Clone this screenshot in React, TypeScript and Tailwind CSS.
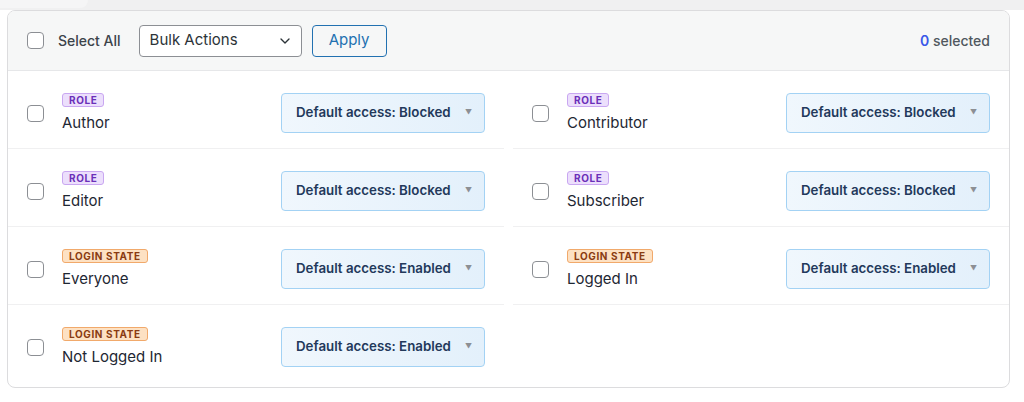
import { ChevronDown } from "lucide-react";

type Rule = {
  kind: "role" | "login";
  name: string;
  access: "Blocked" | "Enabled";
};

const rules: Rule[] = [
  { kind: "role", name: "Author", access: "Blocked" },
  { kind: "role", name: "Contributor", access: "Blocked" },
  { kind: "role", name: "Editor", access: "Blocked" },
  { kind: "role", name: "Subscriber", access: "Blocked" },
  { kind: "login", name: "Everyone", access: "Enabled" },
  { kind: "login", name: "Logged In", access: "Enabled" },
  { kind: "login", name: "Not Logged In", access: "Enabled" },
];

const Checkbox = () => (
  <span className="block w-[17px] h-[17px] shrink-0 rounded-[4px] border border-[#8c8f94] bg-white" />
);

const Badge = ({ kind }: { kind: Rule["kind"] }) =>
  kind === "role" ? (
    <span className="inline-flex items-center h-[14px] px-[6px] rounded-[3px] border border-[#c9a7f1] bg-[#ecdffc] text-[#6a2fb8] text-[10px] font-bold tracking-[0.06em] leading-none">
      ROLE
    </span>
  ) : (
    <span className="inline-flex items-center h-[14px] px-[6px] rounded-[3px] border border-[#f1a96b] bg-[#fde1c3] text-[#8a3b12] text-[10px] font-bold tracking-[0.06em] leading-none">
      LOGIN STATE
    </span>
  );

const RuleRow = ({ rule, last }: { rule: Rule; last: boolean }) => (
  <div
    className={
      last
        ? "flex items-center px-[19px] pt-[22px] pb-[15px]"
        : "flex items-center px-[19px] pt-[22px] pb-[15px] border-b border-[#f0f0f1]"
    }
  >
    <Checkbox />
    <div className="ml-[18px] flex-1 flex flex-col items-start">
      <Badge kind={rule.kind} />
      <span className="mt-[5px] text-[15px] leading-[21px] text-[#1e2733]">{rule.name}</span>
    </div>
    <div className="w-[204px] h-[40px] flex items-center justify-between pl-[14px] pr-[12px] rounded-[4px] border border-[#a3d2f4] bg-gradient-to-r from-[#f0f7fd] to-[#e3f0fb]">
      <span className="text-[13.3px] font-semibold text-[#23395b]">
        Default access: {rule.access}
      </span>
      <span className="text-[7px] text-[#8c8f94]">▼</span>
    </div>
  </div>
);

export default function App() {
  return (
    <div className="w-[1024px] h-[402px] bg-white font-['Inter','Liberation_Sans',sans-serif]">
      {/* strip of the panel above */}
      <div className="h-[10px] bg-[#f0f0f1] flex">
        <div className="w-[88px] h-[8px] rounded-br-[10px] bg-[#f5f5f6]" />
      </div>

      <div className="ml-[7px] w-[1003px] rounded-[8px] border border-[#dcdcde] overflow-hidden">
        {/* toolbar */}
        <div className="h-[60px] flex items-center px-[19px] bg-[#f6f7f7] border-b border-[#e6e7e9]">
          <Checkbox />
          <span className="ml-[14px] text-[14px] font-medium text-[#3c434a]">Select All</span>
          <div className="ml-[18px] w-[163px] h-[32px] flex items-center justify-between pl-[10px] pr-[8px] rounded-[4px] border border-[#8c8f94] bg-white">
            <span className="text-[15px] text-[#2c3338]">Bulk Actions</span>
            <ChevronDown className="w-[16px] h-[16px] text-[#2c3338]" strokeWidth={2} />
          </div>
          <button className="ml-[10px] w-[75px] h-[32px] rounded-[4px] border border-[#2271b1] bg-[#f6f7f7] text-[15px] text-[#2271b1]">
            Apply
          </button>
          <div className="ml-auto text-[14px] font-medium">
            <span className="text-[#3858e9] font-semibold">0</span>
            <span className="text-[#50575e]"> selected</span>
          </div>
        </div>

        {/* rules */}
        <div className="grid grid-cols-2 gap-x-[9px] pb-[5px]">
          {rules.map((rule, i) => (
            <RuleRow key={rule.name} rule={rule} last={i === rules.length - 1} />
          ))}
        </div>
      </div>
    </div>
  );
}
